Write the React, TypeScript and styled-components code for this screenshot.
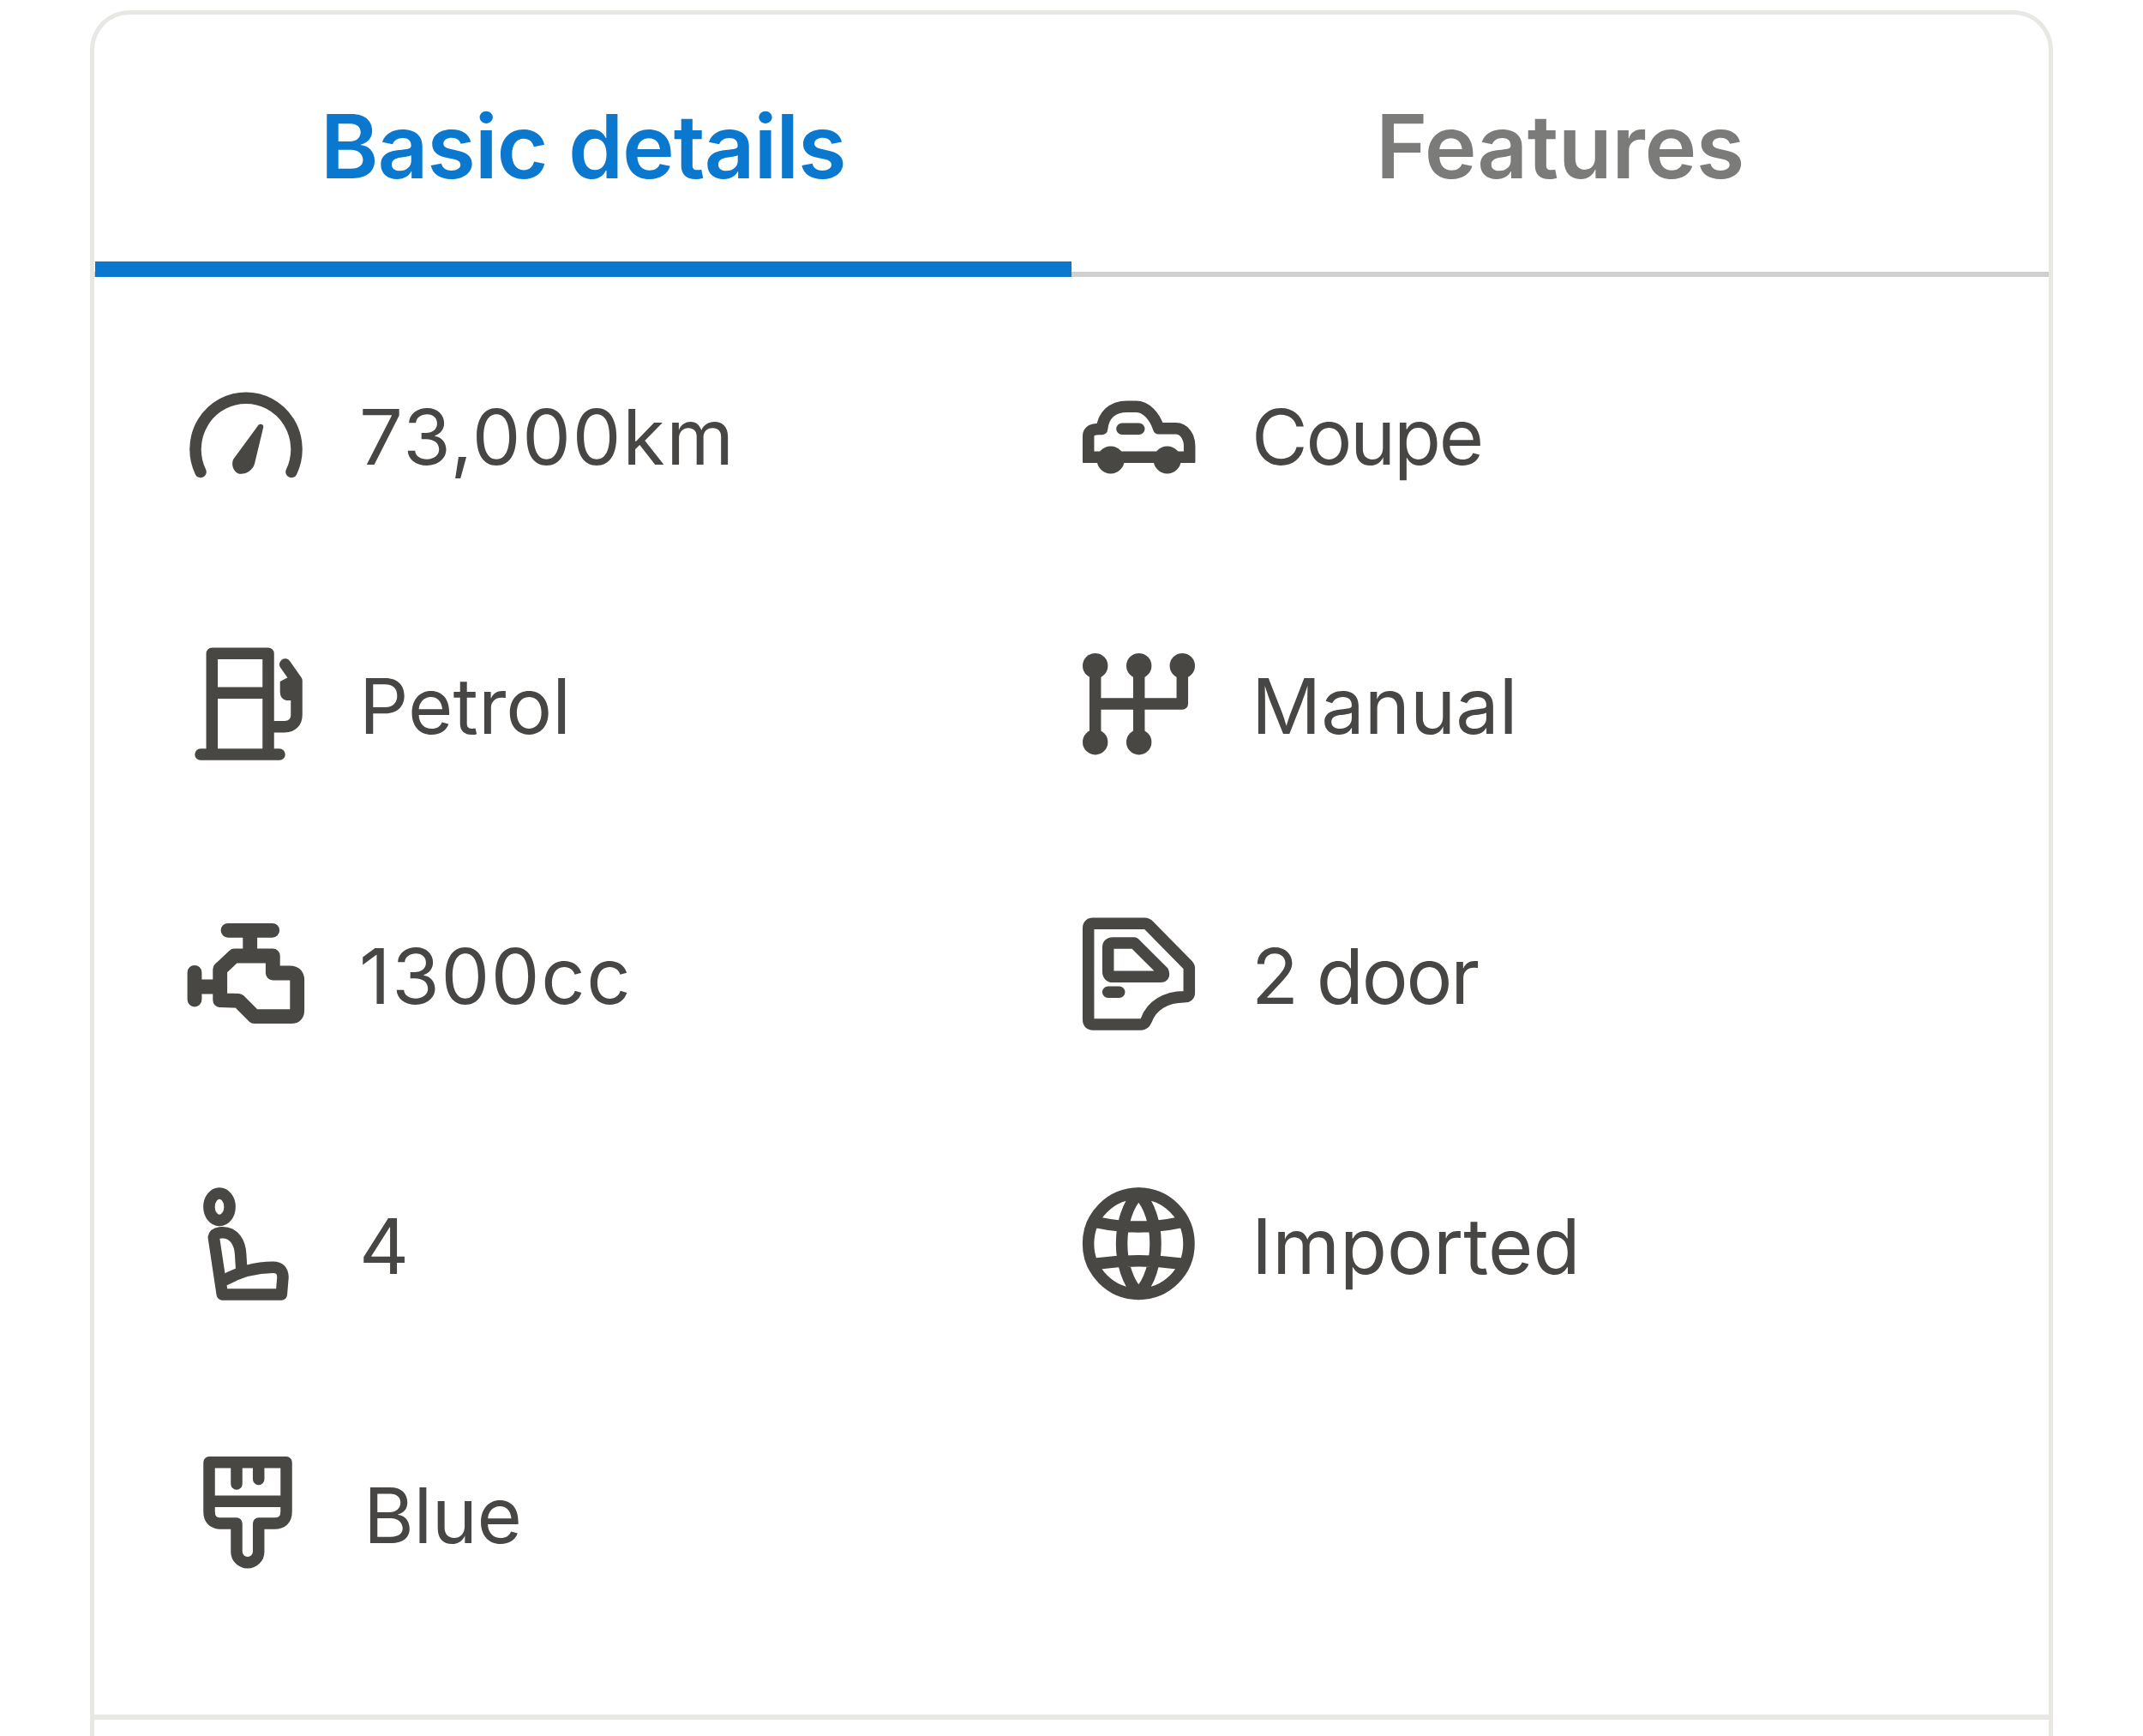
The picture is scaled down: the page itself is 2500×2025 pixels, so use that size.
import React from "react";
import styled, { createGlobalStyle } from "styled-components";

const Global = createGlobalStyle`
  html, body { margin: 0; padding: 0; background: #fff; overflow: hidden; }
  body { font-family: Inter, "Liberation Sans", sans-serif; }
`;

const Page = styled.div`
  height: 2025px;
  padding: 12px 105px 0;
  box-sizing: border-box;
`;

const Card = styled.section`
  width: 2290px;
  height: 2013px;
  box-sizing: border-box;
  border: 5px solid #e9e7e3;
  border-bottom: 0;
  border-radius: 46px 46px 0 0;
  overflow: hidden;
  background: #fff;
`;

const TabBar = styled.div`
  display: grid;
  grid-template-columns: 1fr 1fr;
  height: 306px;
  box-sizing: border-box;
  border-bottom: 6px solid #cfcfcd;
`;

const Tab = styled.div<{ $active?: boolean }>`
  position: relative;
  display: flex;
  align-items: center;
  justify-content: center;
  padding-top: 6px;
  box-sizing: border-box;
  font-size: 103px;
  font-weight: 600;
  letter-spacing: ${(p) => (p.$active ? "-1.2px" : "-0.5px")};
  color: ${(p) => (p.$active ? "#0b78d0" : "#7b7b79")};

  &::after {
    content: "";
    display: ${(p) => (p.$active ? "block" : "none")};
    position: absolute;
    left: 1px;
    right: 0;
    bottom: -6px;
    height: 18px;
    background: #0b78d0;
  }
`;

const Specs = styled.div`
  display: grid;
  grid-template-columns: 1041px 1fr;
  grid-auto-rows: 144px;
  row-gap: 170.7px;
  padding: 111.5px 0 162.5px 106px;
  border-bottom: 6px solid #e9e7e3;
`;

const Spec = styled.div`
  display: flex;
  align-items: center;
  gap: 59px;
`;

const Label = styled.span<{ $shift?: number; $track?: number }>`
  margin-left: ${(p) => p.$shift ?? 0}px;
  padding-top: 6px;
  font-size: 90px;
  font-weight: 400;
  line-height: 1;
  letter-spacing: ${(p) => p.$track ?? 0}px;
  color: #484644;
`;

const Icon = styled.svg<{ $weight?: number }>`
  width: 144px;
  height: 144px;
  flex: none;
  fill: none;
  stroke: #494744;
  stroke-width: ${(p) => p.$weight ?? 13.5};
  stroke-linecap: round;
  stroke-linejoin: round;
`;

const ink = "#494744";

const Speedo = () => (
  <Icon viewBox="0 0 144 144">
    <path d="M18 115.5A59 60 0 1 1 124 115.5" />
    <path fill={ink} stroke="none" d="M85.5 60.8C87.5 58.8 91.5 59.8 91.3 63L81 106C79 113 72 117.8 65 117.8C58 117.8 53 109 56 101Z" />
  </Icon>
);
const Fuel = () => (
  <Icon viewBox="0 0 144 144">
    <path d="M31.3 131V13.3H97V131M31.3 59.3H97M18 131H110M97 98.7H116C125 98.7 130 93 130 85V45L116.7 26" />
    <path fill={ink} stroke="none" d="M110.7 46L122 40L136 46V68H118Q110.7 66 110.7 58Z" />
  </Icon>
);
const Engine = () => (
  <Icon viewBox="0 0 144 144" $weight={16.8}>
    <path d="M50 21.3H101.7M75.7 21.3V51M102.3 51H57.3L40.7 66.7V102.7L62.3 103.3L80.7 121.7H124Q130.7 121.7 130.7 114.3V79.3Q130.7 71 122.3 71H102.3ZM11 70.3V102M11 87H40" />
  </Icon>
);
const Seat = () => (
  <Icon viewBox="0 0 144 144">
    <ellipse cx="40" cy="28.7" rx="12.1" ry="15.8" />
    <path d="M33.3 64.3L43.3 131H112.3L114 111Q114 99.3 102.3 99.3C84 99.3 64 104.3 45.7 114.3M33.3 64.3Q34 59.3 42.3 58.7C57.3 57.7 64 71 64.7 84.3L65.7 101" />
  </Icon>
);
const Brush = () => (
  <Icon viewBox="0 0 144 144">
    <path d="M28 12.8H118V70Q118 84 104 84H85.7V117A12.85 12.85 0 0 1 60 117V84H42Q28 84 28 70ZM28 58.2H118M60 12.8V38M85.7 12.8V32.5" />
  </Icon>
);
const Car = () => (
  <Icon viewBox="0 0 144 144">
    <path strokeLinecap="butt" d="M12.7 104.4V73.8Q12.7 65.5 24.7 65.5H28.5C30 50 40 39.2 58 39.2H68C80 39.2 90 50 94.7 64.8H114.7C124 64.8 130.7 74 130.7 85.5V104.4" />
    <path strokeLinecap="butt" d="M6.4 98.2H137" />
    <path d="M52 65.2H71.7" />
    <circle cx="38.7" cy="101.5" r="16" fill={ink} stroke="none" />
    <circle cx="104.7" cy="101.5" r="16" fill={ink} stroke="none" />
  </Icon>
);
const Gear = () => (
  <Icon viewBox="0 0 144 144">
    <path d="M20.7 27.7V116.7M71.7 27.7V116.7M20.7 72H122.3V27.7" />
    <g fill={ink} stroke="none">
      <circle cx="20.7" cy="27.7" r="14.7" />
      <circle cx="71.7" cy="27.7" r="14.7" />
      <circle cx="122.3" cy="27.7" r="14.7" />
      <circle cx="20.7" cy="116.7" r="14.7" />
      <circle cx="71.7" cy="116.7" r="14.7" />
    </g>
  </Icon>
);
const Door = () => (
  <Icon viewBox="0 0 144 144">
    <path d="M18 13.3H78Q81.3 13.3 83.7 16L128 61Q130.3 63.7 130.3 64.7V94.3Q130.3 98.7 124.7 98.7C103 98.7 86.3 109.3 80.3 126Q78 131 74.7 131H18Q12.7 131 12.7 125.3V18.7Q12.7 13.3 18 13.3Z" />
    <path d="M41.3 36H66.3L99.7 69.3Q102.3 75.3 96.3 75.3H41.3Q35.7 75.3 35.7 69.3V41Q35.7 36 41.3 36ZM35.7 93.3H48.7" />
  </Icon>
);
const Globe = () => (
  <Icon viewBox="0 0 144 144">
    <circle cx="71.3" cy="71.7" r="58.7" />
    <path d="M71.3 13C45 40 45 103 71.3 130M71.3 13C97.6 40 97.6 103 71.3 130M23.3 47Q71.3 57 119.3 47M23.3 95Q71.3 88.4 119.3 95" />
  </Icon>
);

const left = [
  { icon: <Speedo />, text: "73,000km", track: 1.7 },
  { icon: <Fuel />, text: "Petrol" },
  { icon: <Engine />, text: "1300cc", track: 1.6 },
  { icon: <Seat />, text: "4" },
  { icon: <Brush />, text: "Blue", shift: 5, track: -0.5 },
];
const right = [
  { icon: <Car />, text: "Coupe", track: -2.3 },
  { icon: <Gear />, text: "Manual" },
  { icon: <Door />, text: "2 door", track: -2.2 },
  { icon: <Globe />, text: "Imported" },
  null,
];

export default function App() {
  return (
    <Page>
      <Global />
      <Card>
        <TabBar>
          <Tab $active>Basic details</Tab>
          <Tab>Features</Tab>
        </TabBar>
        <Specs>
          {left.map((l, i) => {
            const r = right[i];
            return (
              <React.Fragment key={l.text}>
                <Spec>
                  {l.icon}
                  <Label $shift={l.shift} $track={l.track}>{l.text}</Label>
                </Spec>
                {r ? (
                  <Spec>
                    {r.icon}
                    <Label $track={r.track}>{r.text}</Label>
                  </Spec>
                ) : (
                  <div />
                )}
              </React.Fragment>
            );
          })}
        </Specs>
      </Card>
    </Page>
  );
}
